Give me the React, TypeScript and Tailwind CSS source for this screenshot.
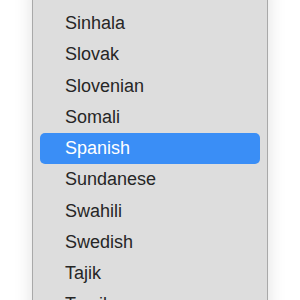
export default function App() {
  const items = ["Sinhala", "Slovak", "Slovenian", "Somali", "Spanish", "Sundanese", "Swahili", "Swedish", "Tajik", "Tamil"];
  return (
    <div className="w-[300px] h-[300px] overflow-hidden bg-white relative" style={{ fontFamily: '"Liberation Sans", Arial, sans-serif' }}>
      <div className="absolute left-[32px] top-[-20px] w-[236px] h-[360px] bg-[#dddddd] border border-[#a9a9a9] shadow-[0_0_18px_rgba(0,0,0,0.12)] pt-[27px] px-[7px]">
        {items.map((it) => (
          <div
            key={it}
            className={
              "h-[31.25px] leading-[31.25px] text-[18px] pl-[25px] rounded-[5px] " +
              (it === "Spanish" ? "bg-[#3a8ef6] text-white" : "text-[#262626]")
            }
          >
            {it}
          </div>
        ))}
      </div>
    </div>
  );
}
